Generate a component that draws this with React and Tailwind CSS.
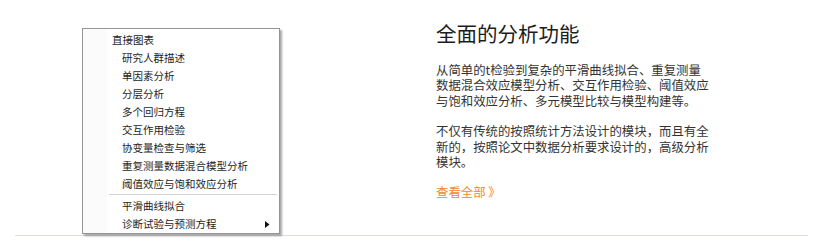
import React from 'react';

const cjk = {fontFamily: '"Noto Sans CJK SC", "Microsoft YaHei", sans-serif'};

const subItems = [
  '研究人群描述',
  '单因素分析',
  '分层分析',
  '多个回归方程',
  '交互作用检验',
  '协变量检查与筛选',
  '重复测量数据混合模型分析',
  '阈值效应与饱和效应分析',
];

/**
 * MenuRow
 * @return {*}
 */
function MenuRow({label, indent, arrow}) {
  return (
    <div className="flex items-center h-[18px] leading-[18px] text-[10.5px] text-[#1e1e1e]">
      <span className={indent ? 'pl-[39px]' : 'pl-[29px]'}>{label}</span>
      {arrow && (
        <svg width="5" height="7" viewBox="0 0 5 7" className="ml-auto mr-[9px]">
          <path d="M0 0 L4.5 3.5 L0 7 Z" fill="#111" />
        </svg>
      )}
    </div>
  );
}

/**
 * ContextMenu
 * @return {*}
 */
function ContextMenu() {
  return (
    <div className="relative w-[198px] h-[206px] bg-white border
     border-[#959595] shadow-[2px_2px_2px_rgba(0,0,0,0.35)] pt-[2px]">
      <div className="absolute left-0 top-0 bottom-0 w-[24px] bg-[#fbfbfb]" />
      <div className="relative">
        <MenuRow label="直接图表" />
        {subItems.map((s) => (
          <MenuRow key={s} label={s} indent />
        ))}
        <div className="mt-[1px] mb-[1px] ml-[26px] mr-[2px] h-[2px] border-t
         border-[#d2d2d2] border-b-white" />
        <MenuRow label="平滑曲线拟合" indent />
        <MenuRow label="诊断试验与预测方程" indent arrow />
      </div>
    </div>
  );
}

export default function App() {
  return (
    <div className="w-[828px] h-[250px] bg-white" style={cjk}>
      <div className="ml-[15px] w-[793px] h-[236px] border-b border-[#e2dfd8] flex">
        <div className="pl-[67px] pt-[28px] w-[421px] shrink-0">
          <ContextMenu />
        </div>
        <div className="pt-[19px] flex flex-col w-[275px]">
          <h2 className="text-[20.5px] leading-[28px] text-[#1c1c1c] font-normal">
            全面的分析功能
          </h2>
          <p className="mt-[15.5px] text-[12.4px] leading-[15.5px] text-[#333]">
            从简单的t检验到复杂的平滑曲线拟合、重复测量数据混合效应模型分析、交互作用检验、阈值效应与饱和效应分析、多元模型比较与模型构建等。
          </p>
          <p className="mt-[15px] text-[12.4px] leading-[15.5px] text-[#333]">
            不仅有传统的按照统计方法设计的模块，而且有全新的，按照论文中数据分析要求设计的，高级分析模块。
          </p>
          <a href="#" className="mt-[14.5px] text-[12.4px] leading-[15.5px] text-[#f5862d]">
            查看全部 》
          </a>
        </div>
      </div>
    </div>
  );
}
